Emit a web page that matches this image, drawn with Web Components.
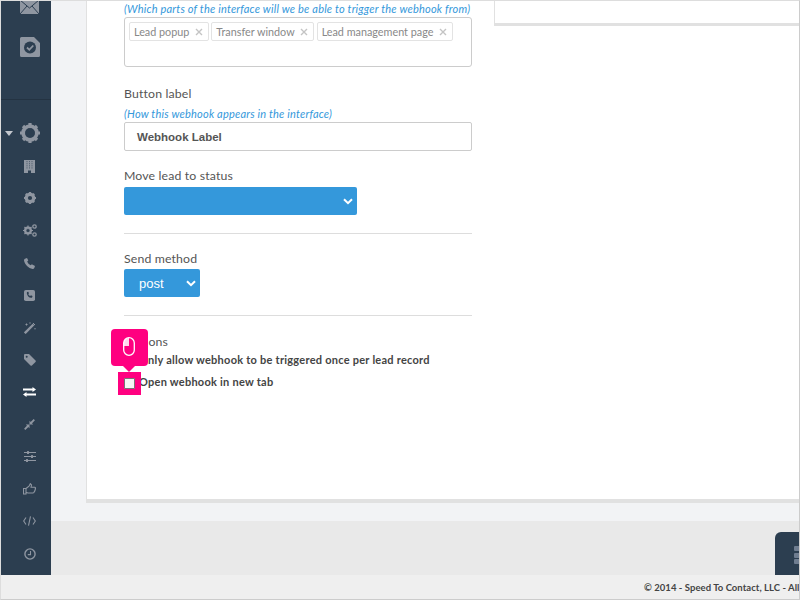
<!DOCTYPE html>
<html><head><meta charset="utf-8"><style>
html,body{margin:0;padding:0;background:#fff}
body{width:800px;height:600px;overflow:hidden;font-family:Lato,"Liberation Sans",sans-serif}
</style></head><body>
<app-shell>
  <side-bar slot="side"></side-bar>
  <web-form slot="main"></web-form>
  <site-footer slot="foot"></site-footer>
</app-shell>
<script>
const def=(n,html)=>customElements.define(n,class extends HTMLElement{constructor(){super();this.attachShadow({mode:'open'}).innerHTML=html}});
const c='#8f96a1';
const icons={
task:`<svg width="20" height="20" viewBox="0 0 20 20"><path d="M1.500 0H14l6 6v12.500a1.500 1.500 0 0 1-1.500 1.500h-17A1.500 1.500 0 0 1 0 18.500v-17A1.500 1.500 0 0 1 1.500 0z" fill="${c}"/><circle cx="10" cy="10.500" r="6" fill="#2c3e50"/><path d="M7 10.500l2.300 2.300L13.300 8.500" fill="none" stroke="${c}" stroke-width="1.800"/></svg>`,
bigGear:`<svg width="20" height="20" viewBox="0 0 20 20"><circle cx="10" cy="10" r="6.700" fill="none" stroke="${c}" stroke-width="4"/><path d="M10 0v20M0 10h20M3 3l14 14M17 3L3 17" stroke="${c}" stroke-width="3.200"/><circle cx="10" cy="10" r="5" fill="#2c3e50"/></svg>`,
building:`<svg width="11" height="13" viewBox="0 0 11 13"><rect width="11" height="13" fill="${c}"/><path d="M3 1v8M5.500 1v8M8 1v8" stroke="#2c3e50" stroke-opacity=".65" stroke-width=".9" stroke-dasharray="1.200 .9"/><rect x="4" y="10.500" width="3" height="2.500" fill="#2c3e50"/></svg>`,
gear:`<svg width="12" height="12" viewBox="0 0 20 20"><circle cx="10" cy="10" r="6.500" fill="none" stroke="${c}" stroke-width="5"/><path d="M10 0v20M0 10h20M3 3l14 14M17 3L3 17" stroke="${c}" stroke-width="3.500"/><circle cx="10" cy="10" r="3.500" fill="#2c3e50"/></svg>`,
gears:`<svg width="14" height="13" viewBox="0 0 14 13"><g fill="none" stroke="${c}"><circle cx="5" cy="6.500" r="3" stroke-width="2"/><path d="M5 1.500v10M0 6.500h10M1.500 3l7 7M8.500 3l-7 7" stroke-width="1.200"/><circle cx="11.500" cy="2.500" r="1.700" stroke-width="1.300"/><circle cx="11.500" cy="10.500" r="1.700" stroke-width="1.300"/></g><circle cx="5" cy="6.500" r="1.600" fill="#2c3e50"/></svg>`,
phone:`<svg width="11" height="11" viewBox="0 0 11 11"><path d="M1 .7L3 0l1.300 2.600-1.100 1c.5 1.500 1.800 3 3.600 3.700l1-1.100L11 8l-.7 2c-.3.700-1 1-1.700.900C4.500 10.300.800 6.700 0 2.500 0 1.700.300 1 1 .7z" fill="${c}"/></svg>`,
phoneBox:`<svg width="11" height="11" viewBox="0 0 11 11"><rect width="11" height="11" rx="1.800" fill="${c}"/><path d="M3.200 2l1-.3.800 1.600-.7.600c.3.900 1 1.700 2 2.100l.600-.7 1.600.8-.3 1.200c-.2.400-.6.500-1 .5C4.800 7.500 3.300 6 2.800 3.200c0-.5.100-1 .4-1.200z" fill="#2c3e50"/></svg>`,
wand:`<svg width="12" height="12" viewBox="0 0 12 12"><path d="M.8 11.200L9.500 2.500" stroke="${c}" stroke-width="2.400"/><path d="M9 1l2 2M2.500 1.500v2M1.500 2.500h2M6 .3v1.400M11 6v1.400" stroke="${c}" stroke-width="1"/></svg>`,
tag:`<svg width="12" height="12" viewBox="0 0 12 12"><path d="M0 1a1 1 0 0 1 1-1h4l6.500 6.500a1 1 0 0 1 0 1.400l-3.600 3.600a1 1 0 0 1-1.400 0L0 5z" fill="${c}"/><circle cx="2.700" cy="2.700" r="1" fill="#2c3e50"/></svg>`,
swap:`<svg width="13" height="10" viewBox="0 0 13 10"><path d="M0 2.500h11M2 7.500h11" stroke="#fff" stroke-width="1.800"/><path d="M9.500 0L13 2.500 9.500 5zM3.500 5L0 7.500 3.500 10z" fill="#fff"/></svg>`,
compress:`<svg width="11" height="11" viewBox="0 0 11 11"><path d="M.7 10.300L4 7M10.300.7L7 4" stroke="${c}" stroke-width="1.800"/><path d="M1.800 5.500h3.700v3.700zM9.200 5.500H5.500V1.800z" fill="${c}"/></svg>`,
sliders:`<svg width="12" height="11" viewBox="0 0 12 11"><path d="M0 1.500h12M0 5.500h12M0 9.500h12" stroke="${c}" stroke-width="1.100"/><rect x="3" y="0" width="2" height="3" rx=".5" fill="${c}"/><rect x="7" y="4" width="2" height="3" rx=".5" fill="${c}"/><rect x="2" y="8" width="2" height="3" rx=".5" fill="${c}"/></svg>`,
thumb:`<svg width="13" height="12" viewBox="0 0 13 12"><path d="M.5 5.500h2.500v5.500H.5zM3 5.500L6 3.200 7.300.7 8.500 2 8 4.300h3.700c1 0 1 1.300.4 1.700.4.500.2 1.200-.3 1.500.1.600-.1 1.100-.6 1.300 0 1-.6 1.200-1.200 1.200H6c-1.300 0-2-.5-3-.9" fill="none" stroke="${c}" stroke-width="1.100"/></svg>`,
code:`<svg width="13" height="10" viewBox="0 0 13 10"><path d="M3 1.500L.7 5 3 8.500M10 1.500L12.300 5 10 8.500M7.500.3L5.500 9.700" fill="none" stroke="${c}" stroke-width="1.100"/></svg>`,
clock:`<svg width="12" height="12" viewBox="0 0 12 12"><circle cx="6" cy="6" r="5.100" fill="none" stroke="${c}" stroke-width="1.400"/><path d="M6.500 3v3.600H3.800" fill="none" stroke="${c}" stroke-width="1.100"/></svg>`};

def('app-shell',`<style>
:host{display:grid;grid-template-columns:50px 1fr;grid-template-rows:574px 24px;border:1px solid #ddd;border-right-color:#ccc;border-bottom-color:#ccc;box-sizing:border-box;height:600px;width:800px;overflow:hidden}
::slotted([slot=foot]){grid-column:1/3}
</style><slot name="side"></slot><slot name="main"></slot><slot name="foot"></slot>`);

const row=(k,h)=>`<div class="r" style="height:${h}px">${icons[k]}</div>`;
def('side-bar',`<style>
:host{display:block;background:#2c3e50;overflow:hidden}
.r{display:flex;align-items:center;justify-content:center;padding-left:7px;box-sizing:border-box;position:relative}
.top{height:98px;border-bottom:1px solid #243342;display:flex;flex-direction:column;align-items:center;padding-left:8px}
.top svg{display:block}
.mail{margin-top:-1px;margin-bottom:23px;margin-left:-1px}
.car{width:0;height:0;border:4px solid transparent;border-top:5px solid #c3c7cd;border-bottom:0;position:absolute;left:4px;top:15px}
.r svg{flex:none}
</style>
<div class="top"><div class="mail"><svg width="19" height="14" viewBox="0 0 19 14"><rect width="19" height="14" fill="${c}"/><path d="M0 0l9.500 8L19 0M0 14l7-8M19 14l-7-8" fill="none" stroke="#2c3e50"/></svg></div>${icons.task}</div>
<div class="r" style="height:34px;margin-top:16px;padding-left:8px"><span class="car"></span>${icons.bigGear}</div>
${['building','gear','gears','phone','phoneBox','wand','tag','swap','compress','sliders','thumb','code','clock'].map(k=>row(k,32.3)).join('')}`);

def('tag-chip',`<style>
:host{display:inline-flex;align-items:center;gap:5.500px;height:17px;border:1px solid #e3e3e3;border-radius:2px;padding:0 5px 0 4px;font-size:10.800px;color:#888;white-space:nowrap}
svg{flex:none}
</style><slot></slot><svg width="8" height="8" viewBox="0 0 8 8"><path d="M1 1l6 6M7 1L1 7" stroke="#c4c4c4" stroke-width="1.400"/></svg>`);

def('form-field',`<style>
:host{display:block}
:host([gap]) .l{margin-bottom:5px}
.l{font-size:12.300px;line-height:16px;padding-top:1px;margin-bottom:-1px;color:#555;letter-spacing:.14px}
.h{font-size:11px;font-style:italic;line-height:14px;color:#3498db;letter-spacing:.2px;white-space:nowrap}
</style><div class="l"><slot name="label"></slot></div><div class="h"><slot name="hint"></slot></div><slot></slot>`);

def('blue-select',`<style>
:host{display:flex;align-items:center;background:#3498db;color:#fff;border-radius:2px;height:28px;box-sizing:border-box;padding:0 4px 0 15px;font:13px "Liberation Sans",sans-serif}
svg{margin-left:auto}
</style><slot></slot><svg width="10" height="7" viewBox="0 0 10 7"><path d="M1 1.200l4 4 4-4" fill="none" stroke="#fff" stroke-width="2"/></svg>`);

def('web-form',`<style>
:host{display:block;background:#f2f3f5;position:relative;overflow:hidden}
.lower{position:absolute;left:0;right:0;top:520px;height:54px;background:#e9e9e9}
.panel{position:absolute;left:35px;right:-2px;top:-2px;height:504px;background:#fff;border-left:1px solid #e1e1e1;border-bottom:4px solid #e1e1e1;box-sizing:border-box;padding:0 0 0 37px}
.side{position:absolute;left:407px;right:0;top:0;height:24px;border-left:1px solid #e1e1e1;border-bottom:3px solid #e1e1e1}
.col{width:348px}
.tags{height:50px;border:1px solid #ccc;border-radius:3px;box-sizing:border-box;padding:4px;display:flex;gap:2.500px;align-items:flex-start;margin-top:1px}
.in{height:29px;border:1px solid #ccc;border-radius:2px;box-sizing:border-box;margin-top:1px;padding-left:12px;font:bold 11.500px/28px "Liberation Sans",sans-serif;color:#555}
hr{border:0;border-top:1px solid #ddd;margin:0}
.chk{font-size:11px;font-weight:700;color:#444;letter-spacing:.25px;line-height:16px;padding-left:15px;white-space:nowrap}
.ops{font-size:12.300px;line-height:16px;padding-top:1px;margin-bottom:-1px;color:#555;letter-spacing:.14px}
.dock{position:absolute;left:724px;top:531px;width:40px;height:43px;background:#2c3e50;border-radius:6px 0 0 0}
.dock i{position:absolute;left:19px;width:10px;height:5px;background:#6f7d90;border-radius:1px}
.tip{position:absolute;left:60px;top:328px;width:37px;height:37px;background:#ff0080;border-radius:4px}
.tip:after{content:"";position:absolute;left:12px;top:37px;border:6px solid transparent;border-top-color:#ff0080;border-bottom:0}
.tip svg{position:absolute;left:12px;top:8px}
.hl{position:absolute;left:67px;top:371px;width:23px;height:23px;background:#ff0080}
.cb{position:absolute;left:6px;top:6px;width:9px;height:9px;background:#f6f6f6;border:1px solid #777;border-radius:1px}
</style>
<div class="lower"></div>
<div class="dock"><i style="top:14px"></i><i style="top:20.500px"></i><i style="top:27px"></i></div>
<div class="panel">
 <div class="side"></div>
 <div class="col">
  <form-field style="padding-top:3px"><span slot="hint">(Which parts of the interface will we be able to trigger the webhook from)</span>
   <div class="tags"><tag-chip>Lead popup</tag-chip><tag-chip>Transfer window</tag-chip><tag-chip>Lead management page</tag-chip></div></form-field>
  <form-field gap style="margin-top:18px"><span slot="label">Button label</span><span slot="hint">(How this webhook appears in the interface)</span><div class="in">Webhook Label</div></form-field>
  <form-field style="margin-top:16px"><span slot="label">Move lead to status</span><blue-select style="width:233px;margin-top:4px"></blue-select></form-field>
  <hr style="margin-top:18px">
  <form-field style="margin-top:16px"><span slot="label">Send method</span><blue-select style="width:76px;margin-top:3px">post</blue-select></form-field>
  <hr style="margin-top:18px">
  <div class="ops" style="margin-top:17px">Options</div>
  <div class="chk" style="margin-top:3px">Only allow webhook to be triggered once per lead record</div>
  <div class="chk" style="margin-top:6px">Open webhook in new tab</div>
 </div>
</div>
<div class="hl"><div class="cb"></div></div>
<div class="tip"><svg width="12" height="19" viewBox="0 0 12 19"><rect x=".7" y=".7" width="10.600" height="17.600" rx="5.300" fill="none" stroke="#fff" stroke-width="1.300"/><path d="M6 .7A5.300 5.300 0 0 0 .7 6v3H6z" fill="#fff" opacity=".85"/></svg></div>
`);

def('site-footer',`<style>
:host{display:block;background:#efefef;white-space:nowrap;overflow:hidden;font-size:9.500px;font-weight:700;color:#444;line-height:26px;padding-left:643px;letter-spacing:.05px}
</style><slot></slot>© 2014 - Speed To Contact, LLC - All Rights Reserved`);
</script>
</body></html>
